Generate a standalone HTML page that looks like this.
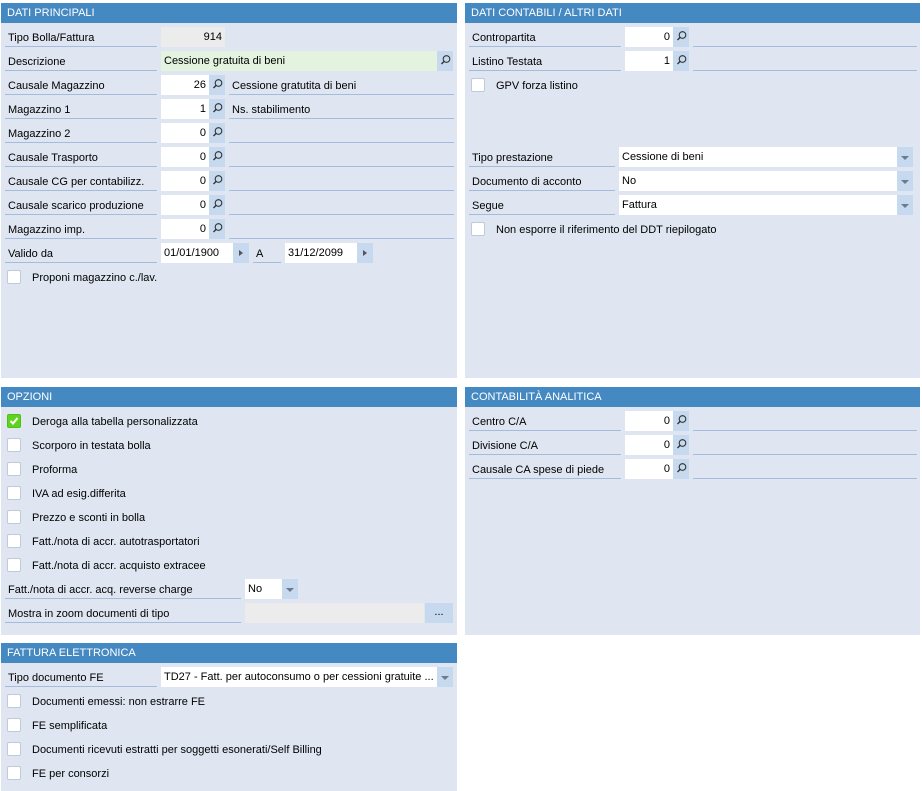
<!DOCTYPE html>
<html><head><meta charset="utf-8"><style>
*{margin:0;padding:0;box-sizing:border-box}
body{width:922px;height:791px;background:#fff;position:relative;overflow:hidden;font-family:"Liberation Sans",sans-serif;font-size:11px;color:#000}
.p{position:absolute;background:#dfe6f1}
.h{position:absolute;left:0;right:0;top:0;height:20px;background:#4589c2;color:#fff;line-height:20px;padding-left:6px;font-size:11px}
.a{position:absolute;height:20px;line-height:20px;white-space:nowrap}
.l{border-bottom:1px solid #a3bcdc;padding-left:3px;line-height:22px}
.w{background:#fff;padding:0 3px}
.g{background:#ececec;padding:0 3px}
.gr{background:#e3f3df;padding:0 3px}
.r{text-align:right}
.b{background:#c6d9ef;width:16px}
.b svg{position:absolute;left:0;top:0}
.cb{position:absolute;width:14px;height:14px;background:#fff;border:1px solid #c0cad8;border-radius:2px}
.ok{background:#5fd31f;border-color:#4fbf14}
</style></head><body>

<div class="p" style="left:1px;top:3px;width:456px;height:375px"><div class="h">DATI PRINCIPALI</div></div>
<div class="p" style="left:465px;top:3px;width:455px;height:375px"><div class="h">DATI CONTABILI / ALTRI DATI</div></div>
<div class="p" style="left:1px;top:387px;width:456px;height:248px"><div class="h">OPZIONI</div></div>
<div class="p" style="left:465px;top:387px;width:455px;height:248px"><div class="h">CONTABILITÀ ANALITICA</div></div>
<div class="p" style="left:1px;top:643px;width:456px;height:148px"><div class="h">FATTURA ELETTRONICA</div></div>

<svg width="0" height="0" style="position:absolute"><defs><g id="m"><circle cx="9.5" cy="8" r="3.3" fill="none" stroke="#333" stroke-width="1.1"/><line x1="7.2" y1="10.3" x2="4.5" y2="13" stroke="#333" stroke-width="1.4"/></g><g id="t"><path d="M6 7 L10 10 L6 13Z" fill="#555"/></g><g id="d"><path d="M4 9 L12 9 L8 13Z" fill="#6a7a90"/></g></defs></svg>

<div class="a l" style="left:5px;top:27px;width:152px">Tipo Bolla/Fattura</div>
<div class="a g r" style="left:161px;top:27px;width:64px">914</div>
<div class="a l" style="left:5px;top:51px;width:152px">Descrizione</div>
<div class="a gr" style="left:161px;top:51px;width:276px">Cessione gratuita di beni</div>
<div class="a b" style="left:437px;top:51px"><svg width="16" height="20"><use href="#m"/></svg></div>

<div class="a l" style="left:5px;top:75px;width:152px">Causale Magazzino</div>
<div class="a w r" style="left:161px;top:75px;width:48px">26</div><div class="a b" style="left:209px;top:75px"><svg width="16" height="20"><use href="#m"/></svg></div>
<div class="a l" style="left:229px;top:75px;width:225px">Cessione gratutita di beni</div>

<div class="a l" style="left:5px;top:99px;width:152px">Magazzino 1</div>
<div class="a w r" style="left:161px;top:99px;width:48px">1</div><div class="a b" style="left:209px;top:99px"><svg width="16" height="20"><use href="#m"/></svg></div>
<div class="a l" style="left:229px;top:99px;width:225px">Ns. stabilimento</div>

<div class="a l" style="left:5px;top:123px;width:152px">Magazzino 2</div>
<div class="a w r" style="left:161px;top:123px;width:48px">0</div><div class="a b" style="left:209px;top:123px"><svg width="16" height="20"><use href="#m"/></svg></div>
<div class="a l" style="left:229px;top:123px;width:225px"></div>

<div class="a l" style="left:5px;top:147px;width:152px">Causale Trasporto</div>
<div class="a w r" style="left:161px;top:147px;width:48px">0</div><div class="a b" style="left:209px;top:147px"><svg width="16" height="20"><use href="#m"/></svg></div>
<div class="a l" style="left:229px;top:147px;width:225px"></div>

<div class="a l" style="left:5px;top:171px;width:152px">Causale CG per contabilizz.</div>
<div class="a w r" style="left:161px;top:171px;width:48px">0</div><div class="a b" style="left:209px;top:171px"><svg width="16" height="20"><use href="#m"/></svg></div>
<div class="a l" style="left:229px;top:171px;width:225px"></div>

<div class="a l" style="left:5px;top:195px;width:152px">Causale scarico produzione</div>
<div class="a w r" style="left:161px;top:195px;width:48px">0</div><div class="a b" style="left:209px;top:195px"><svg width="16" height="20"><use href="#m"/></svg></div>
<div class="a l" style="left:229px;top:195px;width:225px"></div>

<div class="a l" style="left:5px;top:219px;width:152px">Magazzino imp.</div>
<div class="a w r" style="left:161px;top:219px;width:48px">0</div><div class="a b" style="left:209px;top:219px"><svg width="16" height="20"><use href="#m"/></svg></div>
<div class="a l" style="left:229px;top:219px;width:225px"></div>

<div class="a l" style="left:5px;top:243px;width:152px">Valido da</div>
<div class="a w" style="left:161px;top:243px;width:72px">01/01/1900</div><div class="a b" style="left:233px;top:243px"><svg width="16" height="20"><use href="#t"/></svg></div>
<div class="a l" style="left:253px;top:243px;width:28px">A</div>
<div class="a w" style="left:285px;top:243px;width:72px">31/12/2099</div><div class="a b" style="left:357px;top:243px"><svg width="16" height="20"><use href="#t"/></svg></div>

<div class="cb" style="left:7px;top:270px"></div><div class="a" style="left:32px;top:268px">Proponi magazzino c./lav.</div>

<div class="a l" style="left:469px;top:27px;width:152px">Contropartita</div>
<div class="a w r" style="left:625px;top:27px;width:48px">0</div><div class="a b" style="left:673px;top:27px"><svg width="16" height="20"><use href="#m"/></svg></div>
<div class="a l" style="left:693px;top:27px;width:224px"></div>
<div class="a l" style="left:469px;top:51px;width:152px">Listino Testata</div>
<div class="a w r" style="left:625px;top:51px;width:48px">1</div><div class="a b" style="left:673px;top:51px"><svg width="16" height="20"><use href="#m"/></svg></div>
<div class="a l" style="left:693px;top:51px;width:224px"></div>
<div class="cb" style="left:471px;top:78px"></div><div class="a" style="left:496px;top:76px">GPV forza listino</div>

<div class="a l" style="left:469px;top:147px;width:146px">Tipo prestazione</div>
<div class="a w" style="left:619px;top:147px;width:278px">Cessione di beni</div><div class="a b" style="left:897px;top:147px"><svg width="16" height="20"><use href="#d"/></svg></div>
<div class="a l" style="left:469px;top:171px;width:146px">Documento di acconto</div>
<div class="a w" style="left:619px;top:171px;width:278px">No</div><div class="a b" style="left:897px;top:171px"><svg width="16" height="20"><use href="#d"/></svg></div>
<div class="a l" style="left:469px;top:195px;width:146px">Segue</div>
<div class="a w" style="left:619px;top:195px;width:278px">Fattura</div><div class="a b" style="left:897px;top:195px"><svg width="16" height="20"><use href="#d"/></svg></div>
<div class="cb" style="left:471px;top:222px"></div><div class="a" style="left:496px;top:220px">Non esporre il riferimento del DDT riepilogato</div>

<div class="cb ok" style="left:7px;top:414px"><svg width="12" height="12" style="position:absolute;left:0;top:0"><path d="M2.5 6 L5 8.5 L9.5 3" fill="none" stroke="#fff" stroke-width="2"/></svg></div><div class="a" style="left:32px;top:412px">Deroga alla tabella personalizzata</div>
<div class="cb" style="left:7px;top:438px"></div><div class="a" style="left:32px;top:436px">Scorporo in testata bolla</div>
<div class="cb" style="left:7px;top:462px"></div><div class="a" style="left:32px;top:460px">Proforma</div>
<div class="cb" style="left:7px;top:486px"></div><div class="a" style="left:32px;top:484px">IVA ad esig.differita</div>
<div class="cb" style="left:7px;top:510px"></div><div class="a" style="left:32px;top:508px">Prezzo e sconti in bolla</div>
<div class="cb" style="left:7px;top:534px"></div><div class="a" style="left:32px;top:532px">Fatt./nota di accr. autotrasportatori</div>
<div class="cb" style="left:7px;top:558px"></div><div class="a" style="left:32px;top:556px">Fatt./nota di accr. acquisto extracee</div>
<div class="a l" style="left:5px;top:579px;width:236px">Fatt./nota di accr. acq. reverse charge</div>
<div class="a w" style="left:245px;top:579px;width:37px">No</div><div class="a b" style="left:282px;top:579px"><svg width="16" height="20"><use href="#d"/></svg></div>
<div class="a l" style="left:5px;top:603px;width:236px">Mostra in zoom documenti di tipo</div>
<div class="a g" style="left:245px;top:603px;width:179px"></div>
<div class="a b" style="left:425px;top:603px;width:28px;text-align:center;line-height:19px">...</div>

<div class="a l" style="left:469px;top:411px;width:152px">Centro C/A</div>
<div class="a w r" style="left:625px;top:411px;width:48px">0</div><div class="a b" style="left:673px;top:411px"><svg width="16" height="20"><use href="#m"/></svg></div>
<div class="a l" style="left:693px;top:411px;width:224px"></div>
<div class="a l" style="left:469px;top:435px;width:152px">Divisione C/A</div>
<div class="a w r" style="left:625px;top:435px;width:48px">0</div><div class="a b" style="left:673px;top:435px"><svg width="16" height="20"><use href="#m"/></svg></div>
<div class="a l" style="left:693px;top:435px;width:224px"></div>
<div class="a l" style="left:469px;top:459px;width:152px">Causale CA spese di piede</div>
<div class="a w r" style="left:625px;top:459px;width:48px">0</div><div class="a b" style="left:673px;top:459px"><svg width="16" height="20"><use href="#m"/></svg></div>
<div class="a l" style="left:693px;top:459px;width:224px"></div>

<div class="a l" style="left:5px;top:667px;width:152px">Tipo documento FE</div>
<div class="a w" style="left:161px;top:667px;width:276px;overflow:hidden">TD27 - Fatt. per autoconsumo o per cessioni gratuite ...</div><div class="a b" style="left:437px;top:667px"><svg width="16" height="20"><use href="#d"/></svg></div>
<div class="cb" style="left:7px;top:694px"></div><div class="a" style="left:32px;top:692px">Documenti emessi: non estrarre FE</div>
<div class="cb" style="left:7px;top:718px"></div><div class="a" style="left:32px;top:716px">FE semplificata</div>
<div class="cb" style="left:7px;top:742px"></div><div class="a" style="left:32px;top:740px">Documenti ricevuti estratti per soggetti esonerati/Self Billing</div>
<div class="cb" style="left:7px;top:766px"></div><div class="a" style="left:32px;top:764px">FE per consorzi</div>

</body></html>
